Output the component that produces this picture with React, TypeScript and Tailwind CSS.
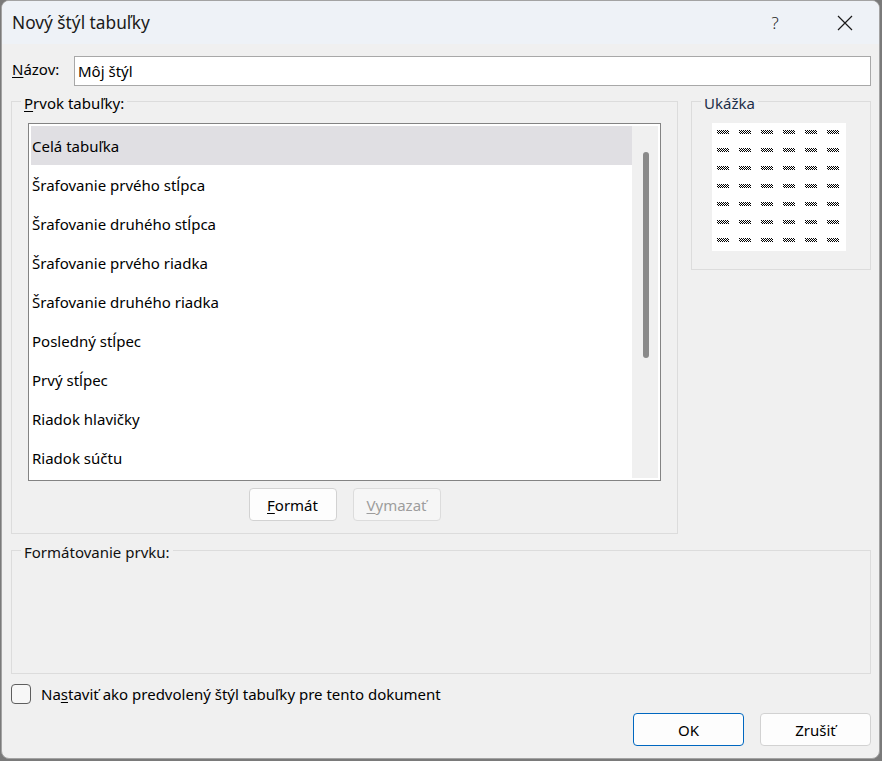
import React from "react";

const font = { fontFamily: '"Noto Sans", "Segoe UI", sans-serif' };

function Preview() {
  const cols = [0, 1, 2, 3, 4, 5];
  const rows = [0, 1, 2, 3, 4, 5, 6];
  return (
    <svg width="134" height="128" viewBox="0 0 134 128" className="block">
      <defs>
        <pattern id="chk" width="2" height="2" patternUnits="userSpaceOnUse">
          <rect x="0" y="0" width="1" height="1" fill="#000" />
          <rect x="1" y="1" width="1" height="1" fill="#000" />
        </pattern>
      </defs>
      <rect width="134" height="128" fill="#fff" />
      {rows.map((r) =>
        cols.map((c) => (
          <rect key={`${r}-${c}`} x={5 + c * 22} y={7 + r * 18} width="12" height="4" fill="url(#chk)" />
        ))
      )}
    </svg>
  );
}

const items = [
  "Celá tabuľka",
  "Šrafovanie prvého stĺpca",
  "Šrafovanie druhého stĺpca",
  "Šrafovanie prvého riadka",
  "Šrafovanie druhého riadka",
  "Posledný stĺpec",
  "Prvý stĺpec",
  "Riadok hlavičky",
  "Riadok súčtu",
];

export default function App() {
  return (
    <div className="w-[882px] h-[761px] bg-[#7a7a7a] pl-[1px] pr-[2px] pb-[2px] overflow-hidden" style={font}>
      <div className="w-full h-full bg-[#f0f0f0] border border-[#a3a3a3] rounded-[8px] overflow-hidden flex flex-col text-[15px] leading-[20px] text-black">
        {/* Title bar */}
        <div className="h-[43px] bg-[#eef2f7] flex items-center pl-[10px] shrink-0">
          <div className="text-[17.3px] text-[#1a1a1a] flex-1">Nový štýl tabuľky</div>
          <div className="w-[40px] text-center text-[17px] font-light text-[#222] mr-[30px]">?</div>
          <div className="w-[40px] flex justify-center mr-[14px]">
            <svg width="16" height="16" viewBox="0 0 16 16">
              <path d="M1 1 L15 15 M15 1 L1 15" stroke="#1a1a1a" strokeWidth="1.2" />
            </svg>
          </div>
        </div>

        <div className="flex-1 flex flex-col pl-[9px] pr-[8px]">
          {/* Name row */}
          <div className="flex items-center mt-[12px] h-[30px]">
            <div className="w-[63px] pl-[1px] -mt-[4px]"><span className="underline underline-offset-2">N</span>ázov:</div>
            <div className="flex-1 h-[30px] bg-white border border-[#a8a8a8] flex items-center pl-[3px]">Môj štýl</div>
          </div>

          {/* Two groups */}
          <div className="flex gap-[13px] mt-[15px] items-start">
            <div className="relative w-[667px] h-[433px] border border-[#dcdcdc] pt-[21px] pl-[16px]">
              <div className="absolute -top-[9px] left-[9px] px-[3px] bg-[#f0f0f0]">
                <span className="underline underline-offset-2">P</span>rvok tabuľky:
              </div>
              <div className="w-[633px] h-[358px] bg-white border border-[#838383] p-[2px] flex">
                <div className="flex-1 flex flex-col">
                  {items.map((t, i) => (
                    <div
                      key={t}
                      className={`h-[39px] shrink-0 flex items-center pl-[1px] ${i === 0 ? "bg-[#e0dfe3]" : ""}`}
                    >
                      {t}
                    </div>
                  ))}
                </div>
                <div className="w-[26px] bg-[#f0f0f0] flex justify-center pt-[26px]">
                  <div className="w-[6px] h-[206px] rounded-full bg-[#8a8a8a] ml-[2px]" />
                </div>
              </div>
              <div className="w-[633px] flex justify-center gap-[16px] mt-[7px]">
                <div className="w-[88px] h-[33px] rounded-[4px] border border-[#d2d2d2] bg-[#fdfdfd] flex items-center justify-center">
                  <span><span className="underline underline-offset-2">F</span>ormát</span>
                </div>
                <div className="w-[88px] h-[33px] rounded-[4px] border border-[#dcdcdc] bg-[#f6f6f6] flex items-center justify-center text-[#9d9d9d]">
                  <span><span className="underline underline-offset-2">V</span>ymazať</span>
                </div>
              </div>
            </div>

            <div className="relative w-[180px] h-[169px] border border-[#dcdcdc] pt-[21px] pl-[20px]">
              <div className="absolute -top-[9px] left-[9px] px-[3px] bg-[#f0f0f0] text-[#1c2e48]">Ukážka</div>
              <Preview />
            </div>
          </div>

          {/* Formatting group */}
          <div className="relative w-[860px] h-[124px] border border-[#dcdcdc] mt-[16px]">
            <div className="absolute -top-[9px] left-[9px] px-[3px] bg-[#f0f0f0] text-[#111]">Formátovanie prvku:</div>
          </div>

          {/* Checkbox */}
          <div className="flex items-center mt-[10px] h-[20px]">
            <div className="w-[20px] h-[20px] rounded-[4px] border border-[#5e5e5e] bg-[#f7f7f7]" />
            <div className="ml-[10px]">
              Na<span className="underline underline-offset-2">s</span>taviť ako predvolený štýl tabuľky pre tento dokument
            </div>
          </div>

          {/* Buttons */}
          <div className="flex justify-end gap-[16px] mt-[9px]">
            <div className="w-[111px] h-[33px] rounded-[4px] border border-[#0067c0] bg-[#fdfdfd] flex items-center justify-center">OK</div>
            <div className="w-[111px] h-[33px] rounded-[4px] border border-[#d2d2d2] bg-[#fdfdfd] flex items-center justify-center">Zrušiť</div>
          </div>
        </div>
      </div>
    </div>
  );
}
